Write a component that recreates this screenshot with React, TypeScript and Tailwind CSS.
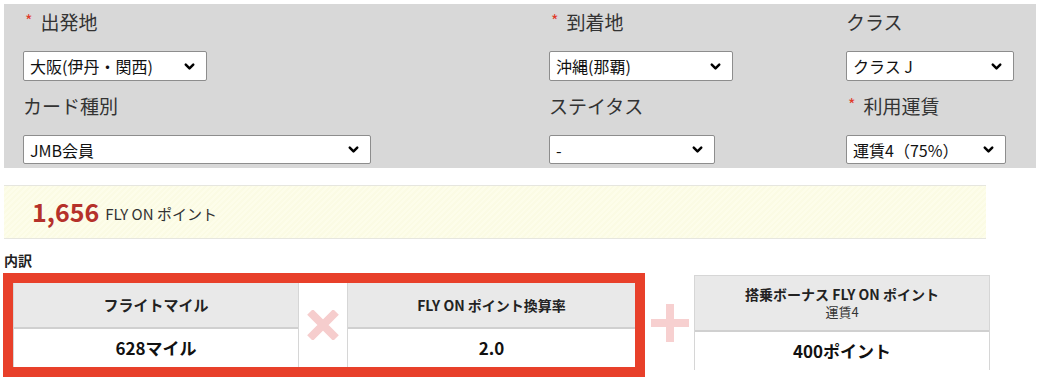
import { ChevronDown } from "lucide-react";

const font = { fontFamily: '"Noto Sans CJK JP", "Noto Sans", sans-serif' };

function Label({ text, required }: { text: string; required?: boolean }) {
	return (
		<div className="flex h-[24px] items-center text-[19px] leading-[24px] text-[#333]">
			{required ? (
				<span className="mr-[8px] ml-[2px] -mt-[5px] text-[16px] leading-[16px] text-[#e03a2a]">*</span>
			) : null}
			<span>{text}</span>
		</div>
	);
}

function Select({ value, width, mt, h }: { value: string; width: string; mt: string; h: string }) {
	return (
		<div
			className={`relative flex items-center rounded-[2px] border border-[#8d8d8d] bg-white pl-[6px] text-[16px] text-[#111] ${width} ${mt} ${h}`}
		>
			<span className="truncate">{value}</span>
			<ChevronDown className="absolute right-[9px] h-[15px] w-[15px] text-black" strokeWidth={4} />
		</div>
	);
}

function Field({
	label,
	required,
	value,
	width,
	row,
}: {
	label: string;
	required?: boolean;
	value: string;
	width: string;
	row: 1 | 2;
}) {
	return (
		<div className={row === 1 ? "flex flex-col" : "mt-[13px] flex flex-col"}>
			<Label text={label} required={required} />
			<Select
				value={value}
				width={width}
				mt="mt-[17px]"
				h={row === 1 ? "h-[30px]" : "h-[29px]"}
			/>
		</div>
	);
}

export default function App() {
	return (
		<div className="min-h-screen bg-white px-[4px] pt-[4px]" style={font}>
			{/* Search conditions */}
			<div className="h-[164px] w-[1032px] bg-[#d8d8d8] pt-[6px] pl-[19px]">
				<div className="grid grid-cols-[526px_297px_1fr]">
					<Field label="出発地" required value="大阪(伊丹・関西)" width="w-[184px]" row={1} />
					<Field label="到着地" required value="沖縄(那覇)" width="w-[184px]" row={1} />
					<Field label="クラス" value="クラス J" width="w-[168px]" row={1} />
					<Field label="カード種別" value="JMB会員" width="w-[348px]" row={2} />
					<Field label="ステイタス" value="-" width="w-[166px]" row={2} />
					<Field label="利用運賃" required value="運賃4（75%）" width="w-[160px]" row={2} />
				</div>
			</div>

			{/* Result */}
			<div className="mt-[17px] flex h-[54px] w-[982px] items-center border-y border-[#e6e6df] bg-[repeating-linear-gradient(135deg,#fdfdea_0px,#fdfdea_2px,#fbfbe4_2px,#fbfbe4_4px)] pl-[28px]">
				<span className="text-[25px] font-bold text-[#b5312a]">1,656</span>
				<span className="ml-[6px] mt-[4px] text-[15px] text-[#333]">FLY ON ポイント</span>
			</div>

			<div className="mt-[12px] text-[14px] font-bold leading-[18px] text-[#222]">内訳</div>

			{/* Breakdown */}
			<div className="mt-[4px] flex items-start">
				<div className="-ml-[1px] border-[10px] border-[#e8402a]">
					<div className="flex">
						<div className="w-[285px] border-l border-[#d6d6d6]">
							<div className="flex h-[46px] items-center justify-center border-b-2 border-[#d0d0d0] bg-[#e9e9e9] text-[15px] font-bold text-[#222]">
								フライトマイル
							</div>
							<div className="flex h-[38px] items-center justify-center bg-white text-[17px] font-bold text-[#111]">
								628マイル
							</div>
						</div>
						<div className="flex w-[50px] items-center justify-center border-x border-[#d6d6d6] bg-white">
							<svg width="32" height="30" viewBox="0 0 32 30">
								<path d="M3 2 L29 28 M29 2 L3 28" stroke="#f6cdcd" strokeWidth="8" />
							</svg>
						</div>
						<div className="w-[287px]">
							<div className="flex h-[46px] items-center justify-center border-b-2 border-[#d0d0d0] bg-[#e9e9e9] text-[14px] font-bold text-[#222]">
								FLY ON ポイント換算率
							</div>
							<div className="flex h-[38px] items-center justify-center bg-white text-[17px] font-bold text-[#111]">
								2.0
							</div>
						</div>
					</div>
				</div>

				<div className="flex h-[100px] w-[49px] items-center justify-center">
					<svg width="38" height="38" viewBox="0 0 38 38">
						<path d="M19 0 V38 M0 19 H38" stroke="#f7d0d0" strokeWidth="8" />
					</svg>
				</div>

				<div className="mt-[2px] w-[296px] border-x border-t border-[#d6d6d6]">
					<div className="flex h-[56px] flex-col items-center justify-center border-b-2 border-[#d0d0d0] bg-[#e9e9e9] leading-[18px]">
						<span className="text-[14px] font-bold text-[#222]">搭乗ボーナス FLY ON ポイント</span>
						<span className="text-[13px] text-[#333]">運賃4</span>
					</div>
					<div className="flex h-[38px] items-center justify-center bg-white text-[17px] font-bold text-[#111]">
						400ポイント
					</div>
				</div>
			</div>
		</div>
	);
}
